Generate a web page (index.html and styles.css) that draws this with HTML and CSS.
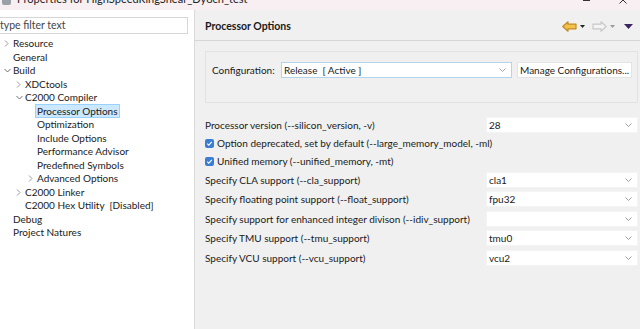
FILE: index.html
```html
<!DOCTYPE html>
<html>
<head>
<meta charset="utf-8">
<link rel="stylesheet" href="styles.css">
</head>
<body>
<div class="titlebar">
  <span class="appicon"></span>
  <span class="title">Properties for HighSpeedRingShear_Dy8ch_test</span>
  <span class="wctl">
    <span class="wmax"></span>
    <svg class="wclose" width="8" height="4" viewBox="0 0 8 4"><path d="M0.5 -3.5 L7.5 3.5 M7.5 -3.5 L0.5 3.5" stroke="#333" stroke-width="1"/></svg>
  </span>
</div>
<div class="main">
  <div class="left">
    <div class="filter">type filter text</div>
    <ul class="tree">
      <li class="l0"><span class="tw"><svg width="5" height="7" viewBox="0 0 5 7"><path d="M1 0.5 L4 3.5 L1 6.5" fill="none" stroke="#9a9a9a"/></svg></span>Resource</li>
      <li class="l0"><span class="tw"></span>General</li>
      <li class="l0"><span class="tw"><svg width="7" height="5" viewBox="0 0 7 5"><path d="M0.5 1 L3.5 4 L6.5 1" fill="none" stroke="#707070"/></svg></span>Build</li>
      <li class="l1"><span class="tw"><svg width="5" height="7" viewBox="0 0 5 7"><path d="M1 0.5 L4 3.5 L1 6.5" fill="none" stroke="#9a9a9a"/></svg></span>XDCtools</li>
      <li class="l1"><span class="tw"><svg width="7" height="5" viewBox="0 0 7 5"><path d="M0.5 1 L3.5 4 L6.5 1" fill="none" stroke="#707070"/></svg></span>C2000 Compiler</li>
      <li class="l2"><span class="tw"></span><span class="sel">Processor Options</span></li>
      <li class="l2"><span class="tw"></span>Optimization</li>
      <li class="l2"><span class="tw"></span>Include Options</li>
      <li class="l2"><span class="tw"></span>Performance Advisor</li>
      <li class="l2"><span class="tw"></span>Predefined Symbols</li>
      <li class="l2"><span class="tw"><svg width="5" height="7" viewBox="0 0 5 7"><path d="M1 0.5 L4 3.5 L1 6.5" fill="none" stroke="#9a9a9a"/></svg></span>Advanced Options</li>
      <li class="l1"><span class="tw"><svg width="5" height="7" viewBox="0 0 5 7"><path d="M1 0.5 L4 3.5 L1 6.5" fill="none" stroke="#9a9a9a"/></svg></span>C2000 Linker</li>
      <li class="l1"><span class="tw"></span>C2000 Hex Utility&nbsp; [Disabled]</li>
      <li class="l0"><span class="tw"></span>Debug</li>
      <li class="l0"><span class="tw"></span>Project Natures</li>
    </ul>
  </div>
  <div class="right">
    <div class="header">
      <span class="htitle">Processor Options</span>
      <span class="nav">
        <svg width="15" height="11" viewBox="0 0 15 11"><path d="M0.8 5.5 L6 0.8 L6 3.2 L14 3.2 L14 7.8 L6 7.8 L6 10.2 Z" fill="#f4c24a" stroke="#c2891c" stroke-width="1.2" stroke-linejoin="round"/></svg>
        <svg class="dd" width="5" height="3" viewBox="0 0 5 3"><path d="M0 0 L5 0 L2.5 3 Z" fill="#222"/></svg>
        <svg class="fwd" width="15" height="11" viewBox="0 0 15 11"><path d="M14.2 5.5 L9 0.8 L9 3.2 L1 3.2 L1 7.8 L9 7.8 L9 10.2 Z" fill="#f4f4f4" stroke="#c8c8c8" stroke-width="1.2" stroke-linejoin="round"/></svg>
        <svg class="dd" width="5" height="3" viewBox="0 0 5 3"><path d="M0 0 L5 0 L2.5 3 Z" fill="#9a9a9a"/></svg>
        <svg class="menu" width="9" height="5" viewBox="0 0 9 5"><path d="M0 0 L9 0 L4.5 5 Z" fill="#3a2560"/></svg>
      </span>
    </div>
    <div class="group">
      <span class="glabel">Configuration:</span>
      <span class="combo focus wide"><span class="ctext">Release&nbsp; [ Active ]</span><svg class="chev" width="7" height="4" viewBox="0 0 7 4"><path d="M0.5 0.5 L3.5 3.5 L6.5 0.5" fill="none" stroke="#a0a0a0"/></svg></span>
      <span class="btn">Manage Configurations...</span>
    </div>
    <div class="rows">
      <div class="row crow first"><span class="lbl">Processor version (--silicon_version, -v)</span><span class="combo"><span class="ctext">28</span><svg class="chev" width="7" height="4" viewBox="0 0 7 4"><path d="M0.5 0.5 L3.5 3.5 L6.5 0.5" fill="none" stroke="#a0a0a0"/></svg></span></div>
      <div class="row krow"><span class="cb"><svg width="9" height="9" viewBox="0 0 9 9"><path d="M2.2 4.6 L3.8 6.2 L6.8 2.8" fill="none" stroke="#fff" stroke-width="1.1"/></svg></span><span class="lbl">Option deprecated, set by default (--large_memory_model, -ml)</span></div>
      <div class="row krow"><span class="cb"><svg width="9" height="9" viewBox="0 0 9 9"><path d="M2.2 4.6 L3.8 6.2 L6.8 2.8" fill="none" stroke="#fff" stroke-width="1.1"/></svg></span><span class="lbl">Unified memory (--unified_memory, -mt)</span></div>
      <div class="row crow"><span class="lbl">Specify CLA support (--cla_support)</span><span class="combo"><span class="ctext">cla1</span><svg class="chev" width="7" height="4" viewBox="0 0 7 4"><path d="M0.5 0.5 L3.5 3.5 L6.5 0.5" fill="none" stroke="#a0a0a0"/></svg></span></div>
      <div class="row crow"><span class="lbl">Specify floating point support (--float_support)</span><span class="combo"><span class="ctext">fpu32</span><svg class="chev" width="7" height="4" viewBox="0 0 7 4"><path d="M0.5 0.5 L3.5 3.5 L6.5 0.5" fill="none" stroke="#a0a0a0"/></svg></span></div>
      <div class="row crow"><span class="lbl">Specify support for enhanced integer divison (--idiv_support)</span><span class="combo"><span class="ctext"></span><svg class="chev" width="7" height="4" viewBox="0 0 7 4"><path d="M0.5 0.5 L3.5 3.5 L6.5 0.5" fill="none" stroke="#a0a0a0"/></svg></span></div>
      <div class="row crow"><span class="lbl">Specify TMU support (--tmu_support)</span><span class="combo"><span class="ctext">tmu0</span><svg class="chev" width="7" height="4" viewBox="0 0 7 4"><path d="M0.5 0.5 L3.5 3.5 L6.5 0.5" fill="none" stroke="#a0a0a0"/></svg></span></div>
      <div class="row crow"><span class="lbl">Specify VCU support (--vcu_support)</span><span class="combo"><span class="ctext">vcu2</span><svg class="chev" width="7" height="4" viewBox="0 0 7 4"><path d="M0.5 0.5 L3.5 3.5 L6.5 0.5" fill="none" stroke="#a0a0a0"/></svg></span></div>
    </div>
  </div>
</div>
</body>
</html>
```

FILE: styles.css
```css
* { box-sizing: border-box; }
html, body { margin: 0; padding: 0; }
body {
  width: 640px;
  height: 329px;
  overflow: hidden;
  font-family: Lato, "Liberation Sans", sans-serif;
  font-size: 10px;
  color: #1a1a1a;
  background: #f0f0f0;
}
.titlebar {
  height: 10px;
  background: #f8eff2;
  position: relative;
  overflow: hidden;
  display: flex;
}
.appicon {
  width: 9px;
  height: 9px;
  margin: -4px 0 0 2px;
  background: #9aa0a8;
  border-radius: 2px;
  flex-shrink: 0;
}
.title {
  margin: -8px 0 0 6px;
  font-size: 11px;
  line-height: 14px;
  color: #222;
  white-space: nowrap;
}
.wctl {
  position: absolute;
  right: 0;
  top: 0;
  display: flex;
}
.wmax {
  width: 7px;
  height: 4px;
  margin-top: -3px;
  margin-right: 29px;
  border: 1px solid #333;
}
.wclose { margin-right: 13px; }
.main {
  display: flex;
  height: 319px;
}
.left {
  width: 195px;
  flex-shrink: 0;
  background: #fff;
  border-right: 1px solid #dadada;
  padding-top: 7px;
}
.filter {
  width: 188px;
  height: 17px;
  border: 1px solid #d6d6d6;
  border-left: none;
  background: #fff;
  color: #444;
  font-size: 10.5px;
  line-height: 15px;
  padding-left: 0;
}
.tree {
  list-style: none;
  margin: 3px 0 0 0;
  padding: 0;
}
.tree li {
  height: 13.5px;
  line-height: 13.5px;
  display: flex;
  align-items: center;
  white-space: nowrap;
  color: #1a1a1a;
}
.tw {
  width: 8px;
  height: 13px;
  display: inline-flex;
  align-items: center;
  justify-content: flex-start;
  flex-shrink: 0;
}
.l0 { padding-left: 4px; }
.l1 { padding-left: 16px; }
.l2 { padding-left: 28px; }
.l1 .tw, .l0 .tw, .l2 .tw { margin-right: 1px; }
.sel {
  background: #cce8ff;
  border: 1px solid #99d1ff;
  margin-left: -2px;
  padding: 0 1px;
  line-height: 12px;
  height: 14px;
}
.right {
  flex: 1;
  min-width: 0;
  background: #f0f0f0;
  padding-left: 10px;
  padding-right: 2px;
}
.header {
  height: 31px;
  margin-left: -10px;
  margin-right: -2px;
  padding-left: 10px;
  border-bottom: 1px solid #d6d6d6;
  display: flex;
  align-items: center;
}
.htitle {
  font-weight: bold;
  font-size: 10.5px;
  flex: 1;
  padding-top: 2px;
}
.nav {
  display: flex;
  align-items: center;
  margin-right: 7px;
  padding-top: 2px;
}
.dd { margin-left: 3px; }
.fwd { margin-left: 7px; }
.menu { margin-left: 9px; }
.group {
  margin-top: 10px;
  height: 52px;
  border: 1px solid #e2e2e2;
  display: flex;
  align-items: flex-start;
  padding: 10px 6px 0 6px;
}
.glabel {
  width: 69px;
  flex-shrink: 0;
  line-height: 16px;
  color: #1a1a1a;
  white-space: nowrap;
}
.combo {
  height: 16px;
  background: #fff;
  border: 1px solid #f4f4f4;
  display: flex;
  align-items: center;
  padding: 0 4px 0 2px;
  flex-shrink: 0;
}
.combo.focus { border-color: #b6d3ec; }
.combo.wide { width: 231px; }
.ctext { flex: 1; line-height: 14px; white-space: nowrap; }
.chev { margin-right: 1px; }
.btn {
  margin-left: 5px;
  width: 115px;
  flex-shrink: 0;
  height: 16px;
  background: #fff;
  border: 1px solid #e4e4e4;
  line-height: 14px;
  padding-left: 2px;
  white-space: nowrap;
  overflow: hidden;
}
.rows {
  margin-top: 12px;
}
.row {
  display: flex;
  align-items: center;
}
.crow { height: 19.5px; }
.crow.first { height: 19px; }
.krow { height: 18px; }
.lbl { flex: 1; min-width: 0; white-space: nowrap; }
.crow .combo { width: 152px; }
.cb {
  width: 9px;
  height: 9px;
  background: #3b7dd0;
  border-radius: 2px;
  margin-right: 3px;
  display: inline-flex;
  flex-shrink: 0;
}
```
